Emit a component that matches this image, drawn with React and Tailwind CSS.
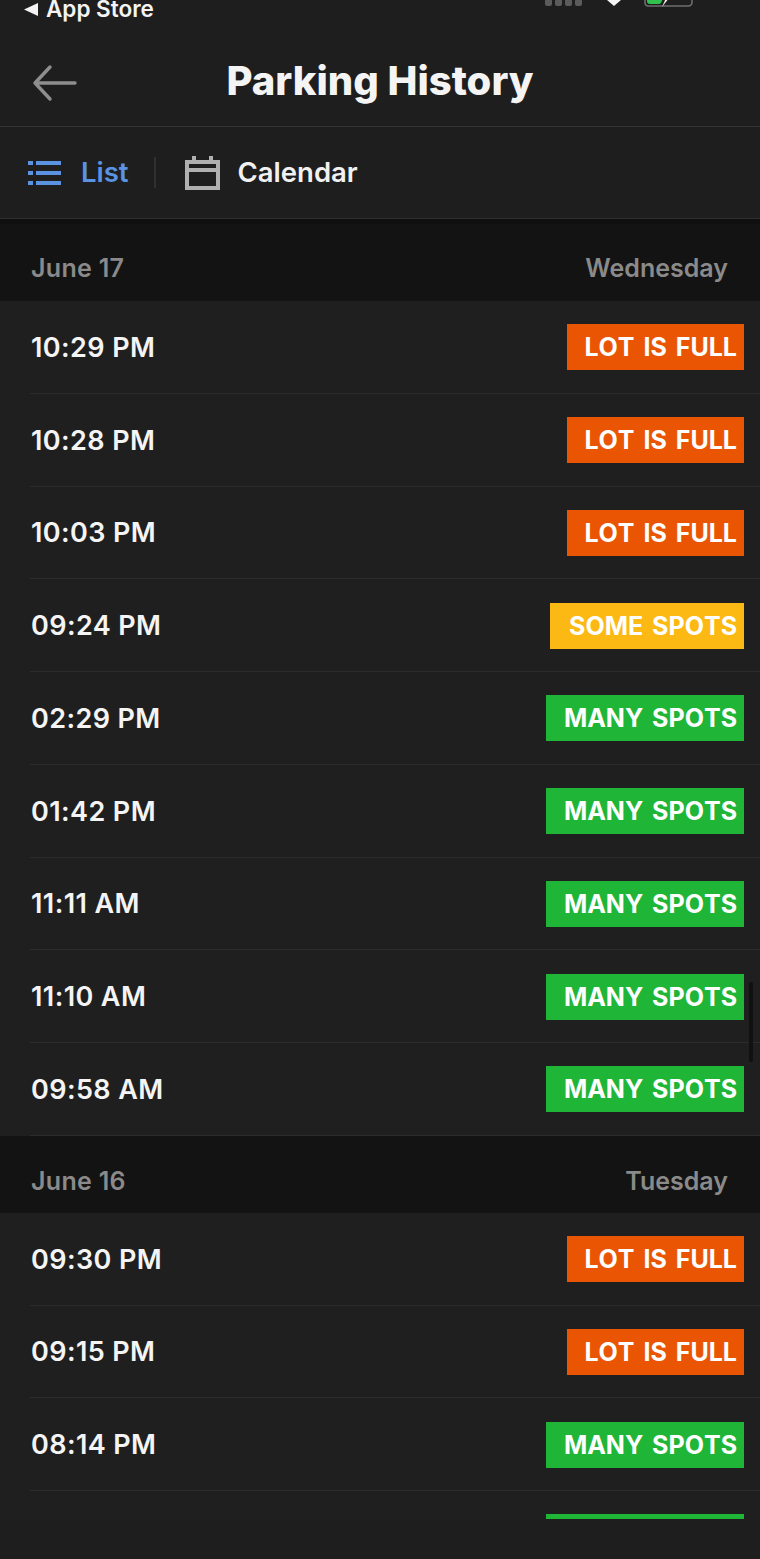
const FULL = { label: "LOT IS FULL", color: "bg-[#ea5504]", width: "w-[177px]" };
const SOME = { label: "SOME SPOTS", color: "bg-[#fdb913]", width: "w-[194px]" };
const MANY = { label: "MANY SPOTS", color: "bg-[#1fb637]", width: "w-[198px]" };
// last badge is cut off by the bottom of the list, only its top edge shows
const MANY_CUT = { label: "", color: "bg-[#1fb637]", width: "w-[198px]" };

const days = [
  {
    date: "June 17",
    weekday: "Wednesday",
    headerClass: "h-[82px] pt-[11px] border-t-[5px] border-[#0f0f0f]",
    rows: [
      ["10:29 PM", FULL],
      ["10:28 PM", FULL],
      ["10:03 PM", FULL],
      ["09:24 PM", SOME],
      ["02:29 PM", MANY],
      ["01:42 PM", MANY],
      ["11:11 AM", MANY],
      ["11:10 AM", MANY],
      ["09:58 AM", MANY],
    ],
  },
  {
    date: "June 16",
    weekday: "Tuesday",
    headerClass: "h-[77px] pt-[15px]",
    rows: [
      ["09:30 PM", FULL],
      ["09:15 PM", FULL],
      ["08:14 PM", MANY],
      ["", MANY_CUT],
    ],
  },
];

const StatusBar = () => (
  <div className="relative h-[36px] overflow-hidden">
    <div className="absolute left-[24px] top-[-5px] flex items-center gap-[8px] text-[22.5px] leading-[28px] font-semibold text-[#f4f4f4]">
      <svg width="14" height="13" viewBox="0 0 14 13">
        <path d="M14 0V13L0 6.5Z" fill="#f4f4f4" />
      </svg>
      App Store
    </div>
    <div className="absolute left-[545px] top-[-1px] flex gap-[3px]">
      <span className="w-[7px] h-[7px] rounded-[2px] bg-[#5b5b5b]" />
      <span className="w-[7px] h-[7px] rounded-[2px] bg-[#5b5b5b]" />
      <span className="w-[7px] h-[7px] rounded-[2px] bg-[#5b5b5b]" />
      <span className="w-[7px] h-[7px] rounded-[2px] bg-[#5b5b5b]" />
    </div>
    <svg className="absolute left-[607px] top-0" width="14" height="6" viewBox="0 0 14 6">
      <path d="M0 0H14L7 6Z" fill="#f4f4f4" />
    </svg>
    <svg className="absolute left-[643px] top-0" width="50" height="8" viewBox="0 0 50 8">
      <path d="M2 -6H46Q49 -6 49 -3V2Q49 6 45 6H5Q2 6 2 2Z" fill="none" stroke="#6d6d6d" strokeWidth="1.6" />
      <path d="M4 -4H20Q19 4 16 4H7Q4 4 4 1Z" fill="#2fc24d" />
      <path d="M23 -2L19 7L26 -2Z" fill="#f4f4f4" />
    </svg>
  </div>
);

const Header = () => (
  <div className="relative flex items-center justify-center h-[91px] border-b border-[#343434]">
    <svg className="absolute left-[32px] top-[28px]" width="45" height="38" viewBox="0 0 45 38" fill="none">
      <path d="M43 19H3M18 3L3 19L18 35" stroke="#8e8e8e" strokeWidth="3.4" strokeLinecap="round" strokeLinejoin="round" />
    </svg>
    <h1 className="text-[40px] leading-none font-extrabold text-[#f4f4f4]">Parking History</h1>
  </div>
);

const Tabs = () => (
  <div className="flex items-center h-[92px] border-b border-[#2f2f2f]">
    <div className="flex items-center pl-[28px]">
      <svg width="33" height="26" viewBox="0 0 33 26" fill="#5a93e2">
        <rect x="0" y="1" width="5" height="4" />
        <rect x="8" y="1" width="25" height="4" />
        <rect x="0" y="11" width="5" height="4" />
        <rect x="8" y="11" width="25" height="4" />
        <rect x="0" y="21" width="5" height="4" />
        <rect x="8" y="21" width="25" height="4" />
      </svg>
      <span className="ml-[20px] text-[27.5px] leading-none font-semibold text-[#5a93e2]">List</span>
    </div>
    <div className="ml-[25px] w-[2px] h-[31px] bg-[#303030]" />
    <div className="flex items-center ml-[29px]">
      <svg width="35" height="34" viewBox="0 0 35 34" fill="none">
        <path d="M2 6H33V32H2ZM2 14H33" stroke="#b0b0b0" strokeWidth="4" />
        <path d="M9 0V8M26 0V8" stroke="#b0b0b0" strokeWidth="4" />
      </svg>
      <span className="ml-[18px] text-[27.5px] leading-none font-semibold text-[#f1f1f1]">Calendar</span>
    </div>
  </div>
);

const DayHeader = ({ date, weekday, headerClass }) => (
  <div className={`flex items-center justify-between pl-[31px] pr-[32px] bg-[#131313] text-[25px] leading-none font-semibold text-[#8a8a8a] ${headerClass}`}>
    <span className="tracking-[0.3px]">{date}</span>
    <span>{weekday}</span>
  </div>
);

const Row = ({ time, status }) => (
  <div className="relative flex items-center justify-between h-[92.75px] pl-[31px] pr-[16px]">
    <span className="text-[27px] leading-none font-semibold text-[#f4f4f4] tracking-[0.4px]">{time}</span>
    <span className={`flex items-center justify-end h-[46px] pt-px pr-[7px] text-[25px] leading-none font-bold text-white [font-kerning:none] [word-spacing:3px] ${status.color} ${status.width}`}>
      {status.label}
    </span>
    <div className="absolute left-[30px] right-0 bottom-0 h-px bg-[#2c2c2c]" />
  </div>
);

export default function App() {
  return (
    <div className="relative w-[760px] h-[1559px] overflow-hidden bg-[#1e1e1f]" style={{ fontFamily: "Inter, sans-serif" }}>
      <StatusBar />
      <Header />
      <Tabs />
      <div className="h-[1300px] overflow-hidden bg-[#1f1f20]">
        {days.map((day) => (
          <div key={day.date}>
            <DayHeader date={day.date} weekday={day.weekday} headerClass={day.headerClass} />
            {day.rows.map(([time, status], i) => (
              <Row key={i} time={time} status={status} />
            ))}
          </div>
        ))}
      </div>
      <div className="absolute left-[749px] top-[982px] w-[4px] h-[80px] rounded-full bg-[#111111]" />
    </div>
  );
}
